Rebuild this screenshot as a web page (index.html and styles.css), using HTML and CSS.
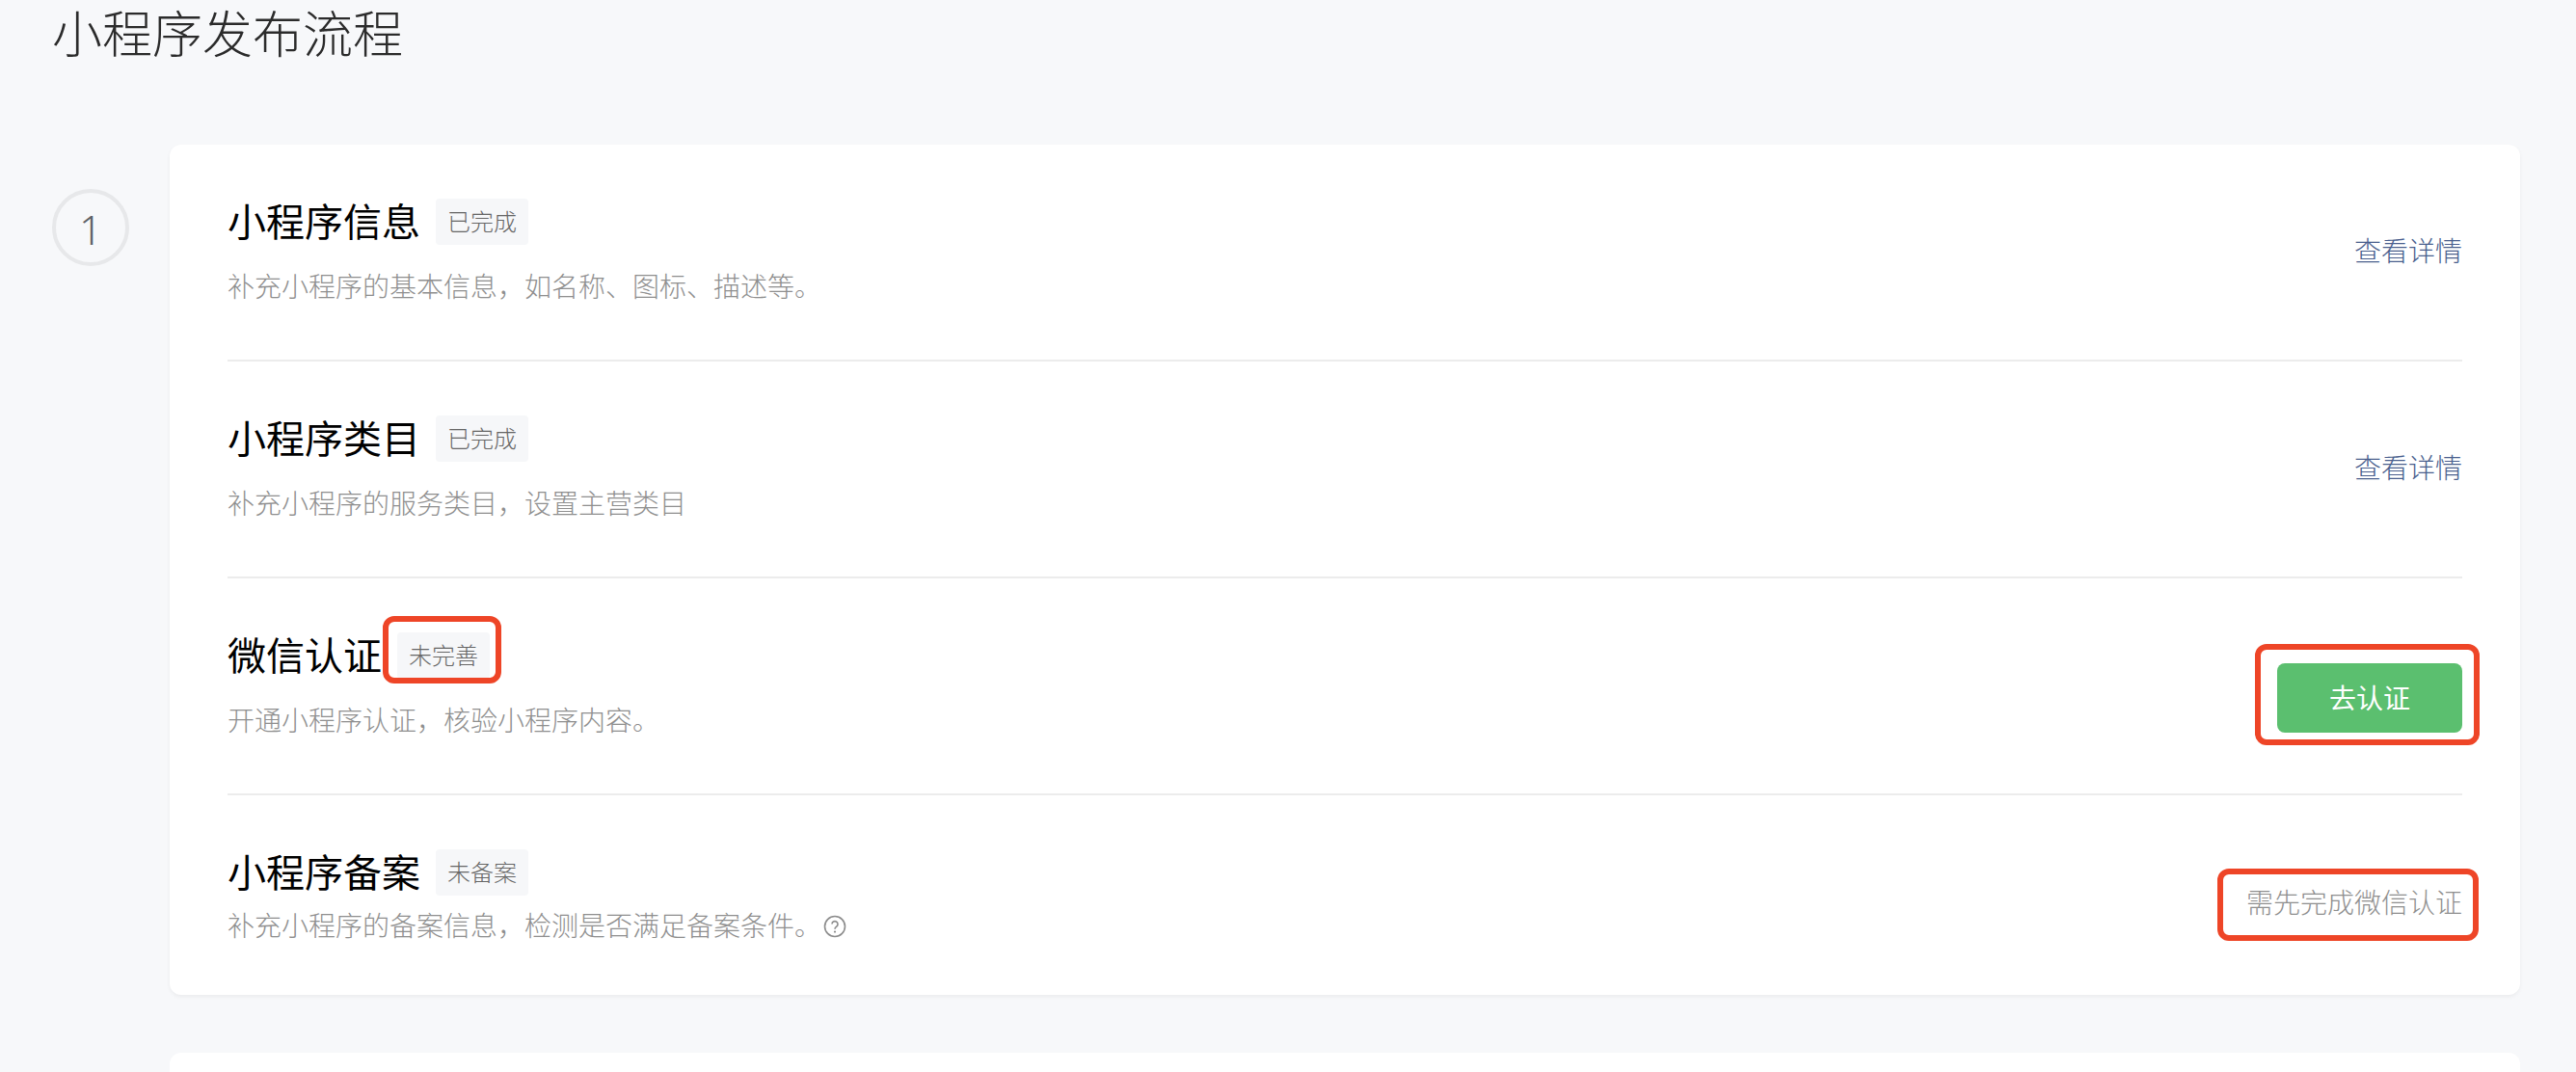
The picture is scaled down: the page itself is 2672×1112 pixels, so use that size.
FILE: index.html
```html
<!DOCTYPE html>
<html lang="zh-CN">
<head>
    <meta charset="UTF-8">
    <title>小程序发布流程</title>
    <link rel="stylesheet" href="styles.css">
</head>
<body>
    <h1 class="page-title">小程序发布流程</h1>

    <div class="step">
        <div class="step-num">1</div>
        <div class="card">
            <div class="row">
                <div class="row-main">
                    <div class="row-head">
                        <span class="row-title">小程序信息</span>
                        <span class="tag">已完成</span>
                    </div>
                    <p class="row-desc">补充小程序的基本信息&#xFF0C;如名称、图标、描述等。</p>
                </div>
                <a class="link" href="#">查看详情</a>
            </div>

            <div class="row">
                <div class="row-main">
                    <div class="row-head">
                        <span class="row-title">小程序类目</span>
                        <span class="tag">已完成</span>
                    </div>
                    <p class="row-desc">补充小程序的服务类目&#xFF0C;设置主营类目</p>
                </div>
                <a class="link" href="#">查看详情</a>
            </div>

            <div class="row">
                <div class="row-main">
                    <div class="row-head">
                        <span class="row-title">微信认证</span>
                        <span class="tag tag-marked">未完善</span>
                    </div>
                    <p class="row-desc">开通小程序认证&#xFF0C;核验小程序内容。</p>
                </div>
                <a class="btn btn-marked" href="#">去认证</a>
            </div>

            <div class="row row-last">
                <div class="row-main">
                    <div class="row-head">
                        <span class="row-title">小程序备案</span>
                        <span class="tag">未备案</span>
                    </div>
                    <p class="row-desc">补充小程序的备案信息&#xFF0C;检测是否满足备案条件。<svg class="help" viewBox="0 0 24 24" width="24" height="24" fill="none"><circle cx="12" cy="12" r="10.5" stroke="#8c8c8c" stroke-width="1.6"/><path d="M9 9.6a3 3 0 1 1 4.7 2.5c-1 .7-1.7 1.3-1.7 2.6" stroke="#8c8c8c" stroke-width="1.6"/><circle cx="12" cy="17.6" r="1.1" fill="#8c8c8c"/></svg></p>
                </div>
                <span class="hint">需先完成微信认证</span>
            </div>
        </div>
    </div>

    <div class="step step-next">
        <div class="card card-next"></div>
    </div>
</body>
</html>
```

FILE: styles.css
```css
* {
    margin: 0;
    padding: 0;
    box-sizing: border-box;
}

body {
    height: 1112px;
    overflow: hidden;
    padding: 0 58px 0 54px;
    background: #f7f8fa;
    font-family: "Noto Sans CJK SC", "Noto Sans", sans-serif;
    color: #000;
}

.page-title {
    height: 150px;
    font-size: 52px;
    font-weight: 300;
    line-height: 66px;
    color: #2b2b2b;
}

.step {
    display: flex;
    align-items: flex-start;
    gap: 42px;
}

.step-num {
    flex: none;
    width: 80px;
    height: 80px;
    margin-top: 46px;
    border: 4px solid #e7e8ea;
    border-radius: 50%;
    font-family: "Noto Sans", sans-serif;
    font-size: 42px;
    font-weight: 300;
    line-height: 76px;
    text-align: center;
    color: #5f6267;
}

.card {
    flex: 1;
    padding: 0 60px;
    background: #fff;
    border-radius: 12px;
    box-shadow: 0 2px 4px rgba(0, 0, 0, 0.05);
}

/* second card is cut off by the bottom of the window */
.step-next {
    margin-top: 60px;
    padding-left: 122px;
}

.card-next {
    height: 20px;
    border-radius: 12px 12px 0 0;
    box-shadow: none;
}

.row {
    display: flex;
    justify-content: space-between;
    align-items: center;
    height: 225px;
    border-bottom: 2px solid #ececec;
}

.row-main {
    align-self: flex-start;
    padding-top: 56px;
}

.row-head {
    display: flex;
    align-items: center;
    gap: 16px;
}

.row-title {
    padding-bottom: 4px;
    font-size: 40px;
    line-height: 44px;
}

.tag {
    position: relative;
    padding: 0 12px 2px;
    font-size: 24px;
    font-weight: 300;
    line-height: 46px;
    color: #666;
    background: #f6f7f9;
    border-radius: 4px;
}

.row-desc {
    margin-top: 22px;
    font-size: 28px;
    font-weight: 300;
    line-height: 40px;
    color: #8f8f8f;
}

.link {
    margin-top: -6px;
    font-size: 28px;
    font-weight: 300;
    color: #4a5f8e;
    text-decoration: none;
}

.btn {
    position: relative;
    width: 192px;
    margin-top: 24px;
    padding-bottom: 2px;
    font-size: 28px;
    line-height: 70px;
    text-align: center;
    color: #fff;
    background: #5bbf6f;
    border-radius: 8px;
    text-decoration: none;
}

.hint {
    position: relative;
    margin-top: 12px;
    font-size: 28px;
    font-weight: 300;
    line-height: 40px;
    color: #8f8f8f;
}

.row-last {
    height: 207px;
    border-bottom: 0;
}

.row-last .row-desc {
    margin-top: 10px;
}

.help {
    vertical-align: -2px;
    margin-left: 2px;
}

/* red review boxes drawn over the screenshot */
.tag-marked::after,
.btn-marked::after,
.hint::after {
    content: "";
    position: absolute;
    border: 6px solid #ee4527;
    border-radius: 12px;
}

.tag-marked::after {
    inset: -17px -12px -5px -15px;
}

.btn-marked::after {
    inset: -20px -18px -13px -23px;
}

.hint::after {
    inset: -14px -17px -21px -30px;
}
```
